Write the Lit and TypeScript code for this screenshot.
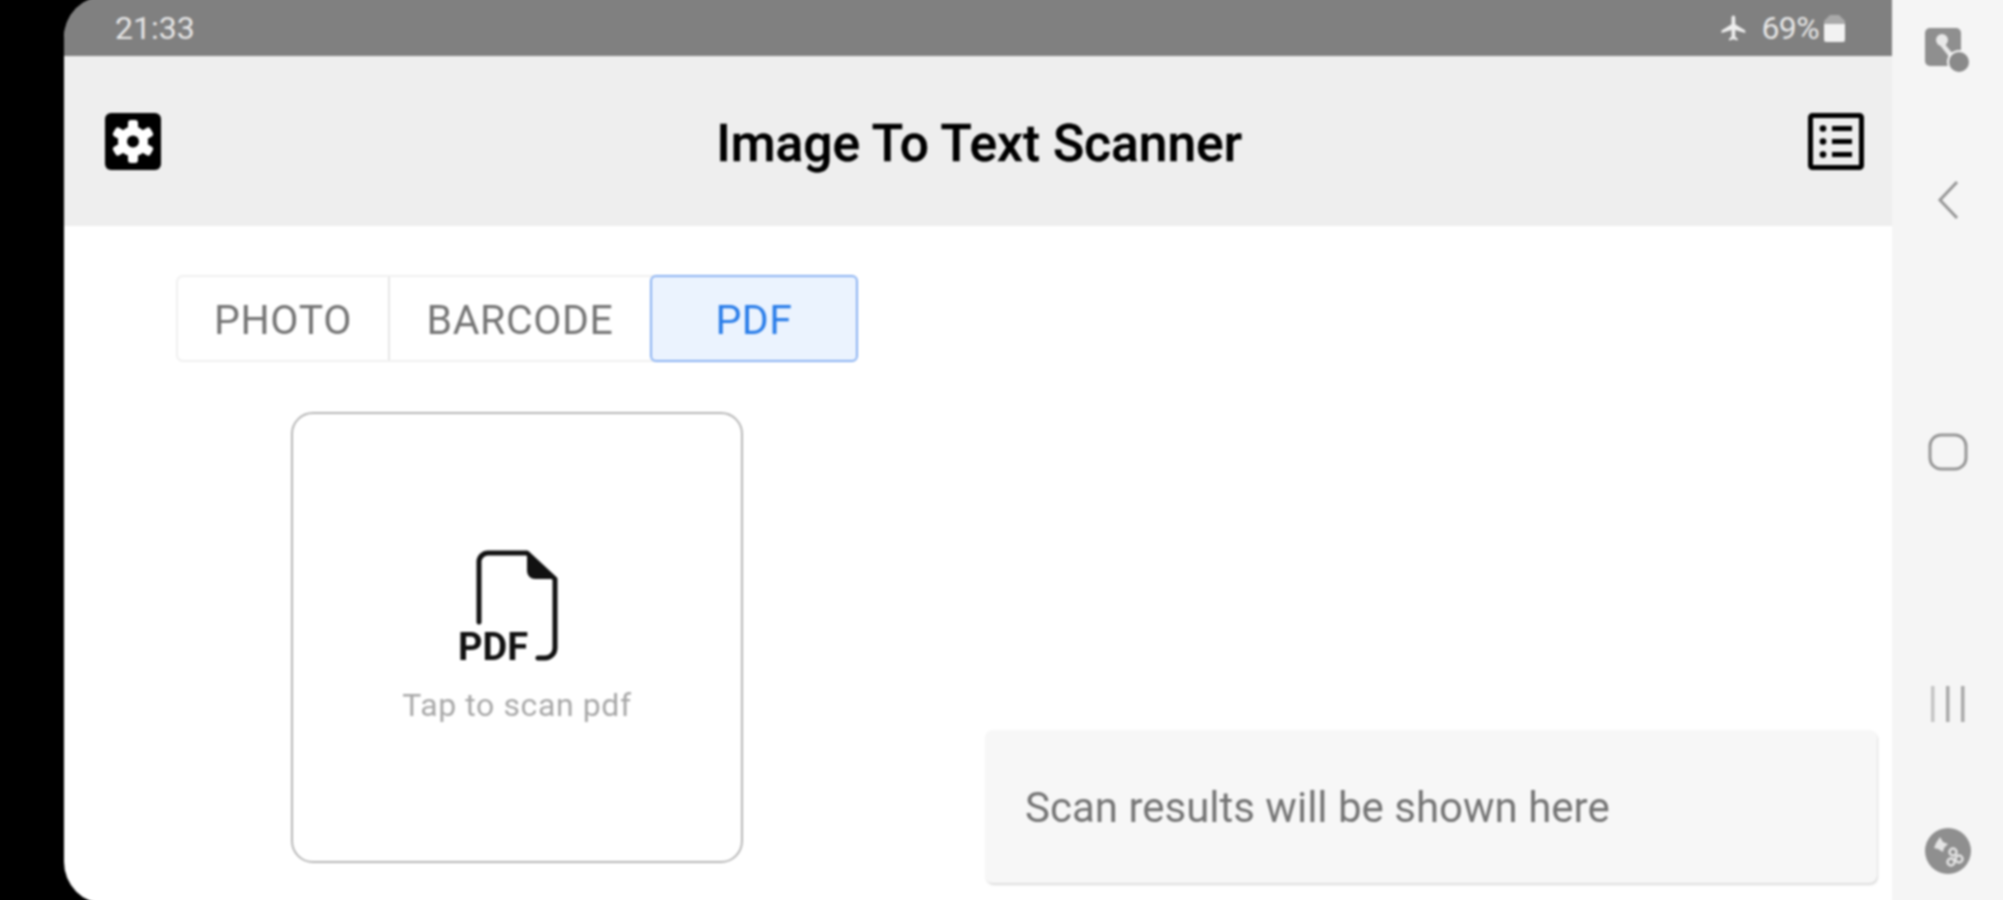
import { LitElement, html, css, svg } from "lit";
import { customElement } from "lit/decorators.js";

const gearAngles = [0, 60, 120, 180, 240, 300];

@customElement("app-root")
export class AppRoot extends LitElement {
  static styles = css`
    :host { display: block; width: 2003px; height: 900px; overflow: hidden; background: #000; }
    * { box-sizing: border-box; }
    .frame { display: flex; width: 2007px; height: 908px; margin-top: -4px; filter: blur(0.8px); font-family: Roboto, "Liberation Sans", sans-serif; }
    .bezel { width: 64px; flex: none; background: #000; }
    .screen { width: 1828px; flex: none; display: flex; flex-direction: column; background: #fff; border-radius: 42px 0 0 42px; overflow: hidden; }
    .status { height: 60px; flex: none; background: #808080; color: #e6e6e6; display: flex; align-items: center; justify-content: space-between; padding: 4px 47px 0 51px; font-size: 32px; }
    .status-right { display: flex; align-items: center; }
    .pct { font-size: 32px; margin: 0 5px 0 12px; letter-spacing: -0.6px; }
    .header { height: 170px; flex: none; background: #eeeeee; display: flex; align-items: center; justify-content: space-between; padding: 0 28px 0 41px; }
    .title { font-size: 51.5px; font-weight: 500; color: #000; white-space: nowrap; padding-top: 4px; margin-right: 11px; -webkit-text-stroke: 0.4px #000; }
    .icon { display: block; flex: none; }
    .main { flex: 1; display: flex; justify-content: space-between; padding: 49px 15px 21px 112px; min-height: 0; }
    .left { display: flex; flex-direction: column; align-items: flex-start; }
    .tabs { display: flex; height: 87px; border: 2px solid #f0f0f0; border-radius: 7px; }
    .tab { display: flex; align-items: center; justify-content: center; font-size: 41px; color: #757575; letter-spacing: 0.6px; padding-top: 3px; }
    .tab.photo { width: 212px; border-right: 2px solid #e6e6e6; }
    .tab.barcode { width: 260px; }
    .tab.pdf { width: 208px; margin: -2px -2px -2px 0; background: #ebf3fe; color: #2a7de9; border: 2px solid #8ab2f2; border-radius: 6px; }
    .card { width: 452px; height: 451px; margin: 50px 0 0 115px; border: 2px solid #b6b6b6; border-radius: 22px; display: flex; flex-direction: column; align-items: center; padding-top: 134px; }
    .doc { margin-left: -10px; overflow: visible; }
    .hint { font-size: 32px; color: #a8a8a8; margin-top: 22px; letter-spacing: 0.6px; white-space: nowrap; }
    .doc-label { font-family: Roboto, "Liberation Sans", sans-serif; font-weight: 700; font-size: 38px; fill: #111; }
    .result { align-self: flex-end; width: 892px; height: 153px; background: #f7f7f7; border-radius: 8px; box-shadow: 1px 2px 2px #dcdcdc; display: flex; align-items: center; padding: 2px 0 0 40px; font-size: 42px; color: #757575; white-space: nowrap; }
    .nav { flex: 1; background: #f5f5f5; display: flex; flex-direction: column; align-items: center; padding: 32px 4px 0 0; }
    .nav .back { margin-top: 106px; }
    .nav .home { margin-top: 213px; }
    .nav .recent { margin-top: 215px; }
    .nav .assist { margin-top: 106px; }
  `;

  render() {
    return html`<div class="frame">
      <div class="bezel"></div>
      <div class="screen">
        <div class="status">
          <span>21:33</span>
          <div class="status-right">
            <svg class="icon" width="30" height="30" viewBox="0 0 24 24" fill="#eee"><path d="M21 16v-2l-8-5V3.500a1.500 1.500 0 0 0-3 0V9l-8 5v2l8-2.500V19l-2 1.500V22l3.500-1 3.500 1v-1.500L13 19v-5.500z"/></svg>
            <span class="pct">69%</span>
            <svg class="icon" width="21" height="27" viewBox="0 0 21 27"><path d="M6 0h9l6 6v21H0V6z" fill="#a9a9a9"/><path d="M0 9h21v15a3 3 0 0 1-3 3H3a3 3 0 0 1-3-3z" fill="#f2f2f2"/></svg>
          </div>
        </div>
        <div class="header">
          <svg class="icon" width="56" height="57" viewBox="0 0 56 57">
            <rect width="56" height="57" rx="6" fill="#000"/>
            <g fill="#fff">
              ${gearAngles.map((a) => svg`<rect x="23" y="7" width="10" height="10" rx="3" transform="rotate(${a} 28 28.500)"/>`)}
              <circle cx="28" cy="28.500" r="15"/>
            </g>
            <circle cx="28" cy="28.500" r="6" fill="#000"/>
          </svg>
          <div class="title">Image To Text Scanner</div>
          <svg class="icon" width="56" height="57" viewBox="0 0 56 57">
            <rect x="2.500" y="2.500" width="51" height="52" rx="2" fill="none" stroke="#000" stroke-width="5"/>
            <g fill="#000">
              <circle cx="15" cy="15.500" r="3.300"/><circle cx="15" cy="28.500" r="3.300"/><circle cx="15" cy="41.500" r="3.300"/>
              <rect x="24" y="13" width="20" height="5"/><rect x="24" y="26" width="20" height="5"/><rect x="24" y="39" width="20" height="5"/>
            </g>
          </svg>
        </div>
        <div class="main">
          <div class="left">
            <div class="tabs">
              <div class="tab photo">PHOTO</div>
              <div class="tab barcode">BARCODE</div>
              <div class="tab pdf">PDF</div>
            </div>
            <div class="card">
              <svg class="icon doc" width="110" height="116" viewBox="-4 0 110 116">
                <path d="M18 74V14a9 9 0 0 1 9-9h39l28 26v69a10 10 0 0 1-10 10h-7" fill="none" stroke="#111" stroke-width="5" stroke-linecap="round" stroke-linejoin="round"/>
                <path d="M66 5l29 26H74a8 8 0 0 1-8-8z" fill="#111"/>
                <text class="doc-label" x="-3" y="112">PDF</text>
              </svg>
              <div class="hint">Tap to scan pdf</div>
            </div>
          </div>
          <div class="result">Scan results will be shown here</div>
        </div>
      </div>
      <div class="nav">
        <svg class="icon" width="46" height="46" viewBox="0 0 46 46">
          <rect x="0" y="0" width="36" height="38" rx="5" fill="#8f8f8f"/>
          <circle cx="17" cy="12" r="6" fill="#e8e8e8"/>
          <path d="M14 16l11 14 4-3-11-13z" fill="#e8e8e8"/>
          <circle cx="34" cy="34" r="11" fill="#8a8a8a" stroke="#f5f5f5" stroke-width="2"/>
        </svg>
        <svg class="icon back" width="22" height="40" viewBox="0 0 22 40"><path d="M20 2L3 20l17 18" fill="none" stroke="#969696" stroke-width="3"/></svg>
        <svg class="icon home" width="40" height="38" viewBox="0 0 40 38"><rect x="2" y="2" width="36" height="34" rx="11" fill="none" stroke="#969696" stroke-width="3"/></svg>
        <svg class="icon recent" width="34" height="36" viewBox="0 0 34 36"><g fill="#a8a8a8"><rect x="0" y="0" width="3.500" height="36" fill="#c4c4c4"/><rect x="15" y="0" width="3.500" height="36"/><rect x="30" y="0" width="3.500" height="36"/></g></svg>
        <svg class="icon assist" width="46" height="46" viewBox="0 0 46 46">
          <circle cx="23" cy="23" r="23" fill="#8f8f8f"/>
          <path d="M15 9l3 5 5 2-4 4-1 4-5-3-4-1 2-5z" fill="#e4e4e4"/>
          <g fill="none" stroke="#e4e4e4" stroke-width="2.500"><circle cx="28" cy="24" r="3.500"/><circle cx="34" cy="31" r="3.500"/><circle cx="26" cy="34" r="3.500"/></g>
        </svg>
      </div>
    </div>`;
  }
}
